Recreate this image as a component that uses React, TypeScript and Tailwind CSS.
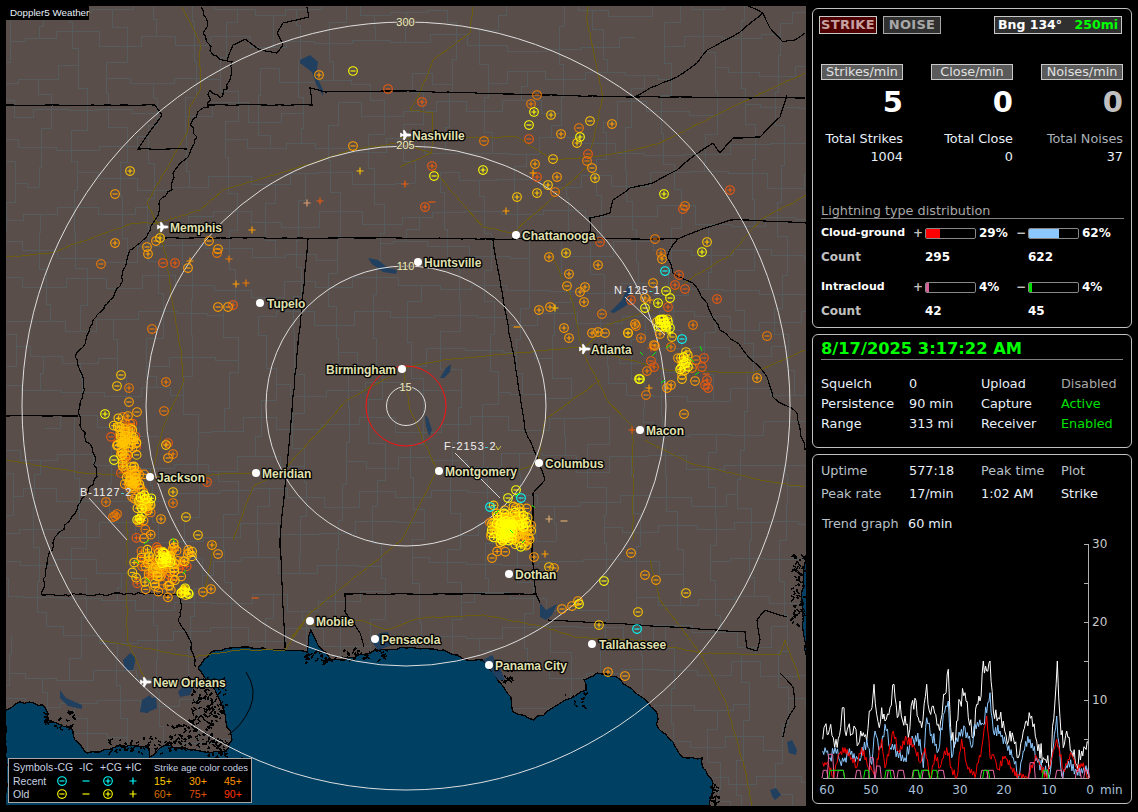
import React from "react";
import { Plane } from "lucide-react";

type P = [number, number];
function rng(seed: number) {
  let a = seed;
  return () => {
    a |= 0; a = (a + 0x6d2b79f5) | 0;
    let t = Math.imul(a ^ (a >>> 15), 1 | a);
    t = (t + Math.imul(t ^ (t >>> 7), 61 | t)) ^ t;
    return ((t ^ (t >>> 14)) >>> 0) / 4294967296;
  };
}
function rough(pts: P[], amp: number, seed: number, step = 6): P[] {
  const r = rng(seed);
  const out: P[] = [];
  for (let i = 0; i < pts.length - 1; i++) {
    const [x1, y1] = pts[i], [x2, y2] = pts[i + 1];
    const n = Math.max(1, Math.round(Math.hypot(x2 - x1, y2 - y1) / step));
    for (let k = 0; k < n; k++) {
      const t = k / n;
      const j = k === 0 ? 0 : amp;
      out.push([x1 + (x2 - x1) * t + (r() - 0.5) * j, y1 + (y2 - y1) * t + (r() - 0.5) * j]);
    }
  }
  out.push(pts[pts.length - 1]);
  return out;
}
const d = (pts: P[], close = false) => "M" + pts.map((p) => p[0].toFixed(1) + " " + p[1].toFixed(1)).join("L") + (close ? "Z" : "");

const gulf: P[] = [[6, 806], [6, 710], [20, 702], [43, 705], [50, 722], [70, 727], [75, 740], [87, 753], [100, 752], [120, 745], [147, 747], [150, 757], [165, 745], [190, 750], [205, 752], [225, 752], [232, 740], [226, 722], [222, 705], [215, 690], [205, 678], [198, 668], [211, 652], [242, 647], [284, 650], [307, 652], [311, 630], [318, 645], [332, 660], [345, 660], [375, 650], [406, 648], [444, 650], [467, 660], [483, 660], [498, 680], [511, 697], [513, 712], [534, 720], [565, 700], [586, 690], [584, 680], [597, 673], [617, 677], [640, 696], [657, 713], [658, 728], [673, 742], [682, 757], [702, 758], [703, 768], [713, 783], [710, 806]];
const atlantic: P[] = [[806, 555], [803, 575], [802, 600], [803, 630], [806, 655]];
const lakes: P[][] = [
  [[300, 60], [310, 55], [318, 62], [316, 75], [323, 90], [323, 96], [316, 84], [312, 72], [300, 63]],
  [[368, 258], [378, 260], [388, 268], [397, 270], [396, 274], [383, 272], [372, 264]],
  [[123, 660], [130, 653], [136, 658], [133, 670], [125, 670]],
  [[142, 700], [150, 695], [154, 702], [148, 713], [140, 712]],
  [[178, 692], [186, 682], [194, 686], [190, 695], [180, 697]],
  [[60, 690], [66, 698], [82, 705], [82, 709], [68, 706], [60, 698]],
  [[144, 700], [156, 697], [157, 708], [146, 713]],
  [[610, 312], [622, 300], [628, 285], [632, 292], [627, 305], [614, 313]],
  [[440, 378], [446, 368], [451, 364], [450, 372], [444, 378]],
  [[425, 415], [428, 418], [432, 430], [429, 436], [426, 426]],
  [[540, 603], [546, 610], [557, 604], [552, 615], [546, 620], [540, 617]],
  [[787, 742], [792, 740], [797, 750], [796, 755], [789, 753]],
  [[770, 790], [776, 788], [781, 795], [775, 800], [772, 796]],
  [[370, 640], [380, 633], [388, 632], [392, 645], [378, 650]],
  [[483, 660], [492, 655], [500, 668], [505, 680], [498, 680]],
];
const states: P[][] = [
  [[6, 105], [155, 105], [162, 115], [138, 149], [187, 149]],
  [[201, 7], [208, 23], [203, 33], [213, 55], [222, 60], [232, 62], [230, 80], [220, 98], [210, 90], [208, 107], [200, 110], [190, 125], [197, 137], [188, 157], [173, 173], [172, 190], [160, 200], [157, 217], [143, 240], [130, 250], [123, 270], [123, 280], [110, 300], [93, 320], [83, 347], [75, 357], [83, 377], [83, 393], [78, 413], [82, 430], [93, 453], [97, 477], [80, 503], [70, 520], [55, 537], [47, 565], [42, 595], [100, 594], [178, 594], [182, 607], [178, 620], [190, 640], [196, 667]],
  [[208, 105], [312, 105], [310, 88], [325, 92], [400, 91], [543, 95], [633, 97], [805, 98]],
  [[165, 238], [300, 238], [400, 238], [493, 239], [590, 239], [678, 239], [700, 230], [730, 220], [745, 220], [806, 223]],
  [[590, 239], [590, 218], [610, 213], [613, 200], [630, 188], [653, 183], [677, 170], [695, 155], [713, 143], [720, 153], [733, 138], [760, 137], [780, 117], [787, 95]],
  [[635, 97], [650, 88], [677, 77], [697, 63], [707, 50], [740, 32], [763, 13], [748, 6]],
  [[763, 13], [770, 28], [783, 42], [795, 40], [805, 33]],
  [[307, 7], [309, 17], [283, 23], [277, 33], [283, 45], [277, 53], [260, 50], [245, 39], [233, 45], [227, 60]],
  [[493, 240], [498, 270], [505, 310], [515, 363], [525, 430], [537, 457], [545, 480], [533, 493], [533, 510], [532, 553], [536, 594], [345, 594], [345, 612], [360, 633], [364, 647]],
  [[308, 238], [305, 270], [280, 540], [285, 648]],
  [[536, 594], [540, 603]],
  [[548, 620], [640, 625], [745, 632], [747, 648], [757, 651], [760, 640], [757, 620], [765, 610], [787, 617]],
  [[678, 239], [667, 257], [673, 273], [693, 283], [707, 303], [720, 330], [743, 350], [767, 377], [773, 397], [797, 413], [805, 450]],
  [[6, 416], [78, 416]],
  [[780, 673], [793, 687], [795, 707], [787, 720], [783, 737]],
];
const roads: P[][] = [
  [[182, 7], [200, 43], [200, 90], [190, 107], [187, 133], [173, 157], [147, 203], [157, 223], [167, 260], [172, 300], [182, 357], [183, 383], [163, 427], [153, 470], [148, 478]],
  [[6, 257], [50, 253], [133, 223], [157, 223], [200, 210], [223, 190], [267, 177], [313, 163], [350, 150], [400, 143], [432, 153]],
  [[473, 7], [470, 33], [433, 60], [420, 93], [410, 110], [433, 113], [432, 153], [400, 167]],
  [[432, 166], [453, 193], [483, 227], [513, 233], [587, 167], [603, 97], [587, 20], [588, 6]],
  [[400, 138], [517, 137], [553, 160], [593, 157], [633, 150], [660, 143], [720, 113], [805, 73]],
  [[580, 353], [607, 325], [653, 310], [693, 277], [730, 255], [760, 220], [806, 195]],
  [[550, 250], [573, 303], [582, 350], [607, 400], [633, 427], [633, 487], [633, 540]],
  [[645, 440], [690, 463], [760, 480], [805, 487]],
  [[403, 368], [443, 360], [580, 347], [667, 370], [753, 373], [805, 350]],
  [[403, 368], [410, 410], [437, 470], [402, 540], [368, 567], [310, 613], [290, 640]],
  [[397, 373], [347, 400], [287, 467], [253, 487], [233, 540]],
  [[6, 460], [83, 473], [150, 477], [257, 473]],
  [[100, 640], [192, 657], [240, 650], [285, 650], [310, 613]],
  [[310, 625], [360, 620], [387, 630], [418, 618], [483, 615], [544, 627], [578, 638], [640, 640], [700, 653], [780, 655]],
  [[127, 520], [127, 597], [127, 640], [145, 680]],
  [[215, 540], [203, 600]],
  [[650, 560], [660, 600], [700, 653], [725, 700], [745, 770], [752, 806]],
  [[780, 655], [785, 640], [800, 680]],
  [[447, 470], [520, 470], [538, 463], [545, 420], [600, 380]],
];

function counties(): string {
  const r = rng(77);
  const cw = 37, ch = 35;
  const v: P[][] = [];
  for (let i = 0; i <= 22; i++) {
    v[i] = [];
    for (let j = 0; j <= 23; j++) v[i][j] = [6 + i * cw + (r() - 0.5) * 22, 6 + j * ch + (r() - 0.5) * 22];
  }
  let s = "";
  for (let i = 0; i <= 22; i++) for (let j = 0; j <= 23; j++) {
    const a = v[i][j];
    if (i < 22 && r() > 0.14) {
      const b = v[i + 1][j];
      s += `M${a[0].toFixed(0)} ${a[1].toFixed(0)}H${((a[0] + b[0]) / 2).toFixed(0)}V${b[1].toFixed(0)}H${b[0].toFixed(0)}`;
    }
    if (j < 23 && r() > 0.14) {
      const b = v[i][j + 1];
      s += `M${a[0].toFixed(0)} ${a[1].toFixed(0)}V${((a[1] + b[1]) / 2).toFixed(0)}H${b[0].toFixed(0)}V${b[1].toFixed(0)}`;
    }
  }
  return s;
}

type S = [number, number, "p" | "m" | "P" | "M", string];
const Y = "#ffff00", G = "#ffc400", O = "#ff9d00", D = "#f07a00", R = "#ee5a0c", C = "#00ffff";
const single: S[] = [
  [130, 171, "p", G], [115, 194, "m", O], [115, 243, "p", O], [101, 264, "m", D], [319, 75, "p", O], [353, 71, "m", Y], [388, 89, "m", R], [353, 146, "m", O], [360, 171, "P", G], [307, 203, "P", "#e0a070"], [320, 201, "P", R], [252, 230, "P", O], [160, 238, "p", G], [156, 241, "m", O], [209, 241, "m", O], [218, 249, "m", O], [217, 253, "m", D], [229, 259, "P", D], [148, 254, "p", O], [147, 247, "m", O], [163, 263, "m", R], [175, 263, "p", R], [190, 261, "P", O], [188, 268, "m", O],
  [422, 102, "p", R], [537, 95, "m", D], [531, 104, "p", D], [534, 112, "p", Y], [551, 115, "p", G], [529, 125, "m", Y], [590, 121, "m", G], [612, 124, "p", O], [579, 128, "m", D], [561, 134, "p", O], [580, 137, "p", Y], [577, 143, "p", G], [529, 139, "m", R], [484, 141, "m", D], [588, 154, "m", R], [553, 159, "m", G], [587, 161, "m", D], [592, 168, "m", O], [535, 164, "p", O], [432, 166, "p", R], [434, 176, "m", Y], [483, 170, "p", Y], [533, 173, "P", O], [537, 177, "p", R], [557, 177, "p", O], [595, 178, "p", G], [548, 185, "p", G], [405, 184, "P", R], [555, 192, "m", D], [537, 193, "p", G], [517, 197, "p", G], [664, 194, "p", Y], [685, 206, "m", D], [683, 209, "m", R], [730, 190, "p", R], [425, 207, "p", R], [432, 202, "M", R], [506, 211, "P", O], [600, 242, "m", R], [655, 239, "m", D], [707, 242, "p", G], [702, 252, "p", Y], [661, 253, "p", D], [662, 259, "p", O], [549, 257, "p", O], [566, 253, "p", G], [598, 265, "p", O],
  [569, 274, "p", O], [567, 286, "m", O], [580, 292, "p", O], [585, 287, "p", O], [584, 302, "p", O], [539, 310, "p", O], [550, 307, "p", O], [555, 308, "P", G], [602, 314, "m", D], [564, 328, "p", O], [569, 338, "p", O], [592, 333, "p", O], [598, 332, "p", O], [605, 333, "m", O], [517, 327, "M", O], [653, 283, "m", O], [666, 291, "m", Y], [670, 298, "m", Y], [658, 303, "p", Y], [645, 298, "p", O], [631, 300, "p", R], [645, 308, "m", Y], [668, 307, "p", R], [675, 285, "p", R], [685, 289, "m", R], [679, 275, "p", R], [665, 271, "m", C], [717, 299, "p", R], [767, 336, "m", D], [757, 378, "p", O], [684, 414, "m", O], [646, 395, "m", D], [649, 388, "P", O], [640, 379, "m", Y], [639, 379, "p", Y], [667, 388, "p", O], [671, 385, "p", O], [632, 430, "P", R],
  [236, 284, "P", O], [246, 283, "P", D], [218, 307, "m", O], [228, 307, "m", O], [233, 305, "p", R], [152, 329, "m", D], [121, 375, "m", G], [117, 386, "m", G], [129, 388, "p", D], [166, 382, "p", D], [129, 402, "m", O], [105, 414, "p", Y], [137, 412, "m", O], [128, 416, "p", O], [123, 417, "m", D], [164, 411, "m", D], [125, 423, "m", D], [168, 443, "p", R], [166, 445, "p", G], [173, 454, "p", D], [168, 458, "m", O], [114, 460, "m", Y], [207, 482, "p", R], [173, 492, "p", G], [173, 503, "p", D], [106, 502, "p", D], [115, 516, "p", D], [113, 517, "m", D], [117, 514, "p", D], [161, 519, "p", O], [186, 517, "m", G], [198, 535, "m", G],
  [212, 545, "p", O], [218, 554, "m", O], [211, 589, "p", O], [203, 592, "m", O], [492, 558, "m", O], [545, 554, "P", O], [534, 557, "p", O], [549, 567, "m", G], [554, 568, "m", O], [631, 553, "m", O], [604, 581, "m", Y], [645, 575, "m", O], [656, 580, "m", O], [686, 593, "m", G], [638, 612, "m", G], [637, 629, "m", C], [599, 625, "p", G], [562, 609, "m", O], [572, 606, "m", O], [578, 601, "p", O], [579, 604, "m", Y], [608, 672, "p", O], [625, 676, "m", O], [255, 598, "M", R],
  [650, 300, "P", O], [516, 490, "m", Y], [521, 498, "m", C], [490, 507, "m", C], [508, 498, "m", Y], [549, 519, "P", "#e0b070"], [564, 521, "M", "#e0b070"],
  [682, 339, "m", C], [657, 322, "p", G], [664, 325, "p", G], [670, 328, "p", Y], [660, 320, "p", Y], [668, 322, "p", Y], [666, 327, "p", Y], [670, 333, "P", Y], [672, 337, "m", G], [628, 333, "p", G], [635, 324, "p", O], [636, 326, "m", D], [641, 338, "p", D], [628, 333, "m", O], [660, 334, "p", O], [671, 347, "p", D], [693, 325, "p", D], [704, 358, "m", R], [696, 360, "m", D], [702, 367, "m", R], [651, 361, "m", R], [654, 367, "p", R], [647, 371, "p", D], [707, 380, "p", R], [708, 388, "p", R], [705, 385, "m", R], [706, 374, "M", R], [695, 381, "m", O], [682, 379, "m", G], [685, 370, "p", G], [684, 364, "m", Y], [681, 358, "m", G], [686, 352, "p", G], [678, 358, "m", O], [692, 368, "m", D], [651, 348, "P", R], [655, 346, "p", D], [654, 345, "m", O],
];

function cluster(seed: number, n: number, cx: number, cy: number, sx: number, sy: number, cols: string[]): S[] {
  const r = rng(seed);
  const out: S[] = [];
  for (let i = 0; i < n; i++) {
    const u = Math.sqrt(-2 * Math.log(1 - r() * 0.98));
    const a = r() * Math.PI * 2;
    out.push([cx + Math.cos(a) * u * sx, cy + Math.sin(a) * u * sy, r() > 0.5 ? "p" : "m", cols[Math.floor(r() * cols.length)]]);
  }
  return out;
}
const order = [R, D, O, G, Y, C];
const strikes: S[] = [
  ...cluster(3, 50, 127, 442, 6, 13, [R, D, O, O, G, G]),
  ...cluster(12, 35, 132, 478, 6, 9, [D, O, O, G, G]),
  ...cluster(4, 14, 127, 443, 4, 6, [G, O, G]),
  ...cluster(5, 32, 142, 504, 6, 8, [Y, G, G, O, D]),
  ...cluster(6, 90, 160, 564, 13, 14, [R, D, O, O, O, G, G]),
  ...cluster(7, 16, 165, 560, 3, 5, [Y, Y, G]),
  ...cluster(8, 10, 185, 592, 3, 2.5, [Y, G]),
  ...cluster(9, 120, 510, 528, 10, 10, [G, G, G, O, O, O, Y]),
  ...cluster(10, 40, 509, 529, 4, 5, [Y, Y, G]),
  ...cluster(11, 24, 512, 528, 12, 12, [O, D, G]),
  ...cluster(13, 10, 664, 323, 4, 4, [Y, G]),
  ...cluster(14, 10, 683, 366, 3, 7, [G, Y, O]),
  ...single,
].sort((a, b) => order.indexOf(a[3]) - order.indexOf(b[3]));

function Sym({ s }: { s: S }) {
  const [x, y, t, c] = s;
  if (t === "p" || t === "m")
    return (
      <g stroke={c} fill="none" strokeWidth="1.15">
        <circle cx={x} cy={y} r="4.3" />
        <path d={t === "p" ? `M${x - 2.5} ${y}H${x + 2.5}M${x} ${y - 2.5}V${y + 2.5}` : `M${x - 2.5} ${y}H${x + 2.5}`} />
      </g>
    );
  return <path stroke={c} strokeWidth="1.15" d={t === "P" ? `M${x - 3.5} ${y}H${x + 3.5}M${x} ${y - 3.5}V${y + 3.5}` : `M${x - 3.5} ${y}H${x + 3.5}`} />;
}

type City = [string, number, number, number, boolean?];
const cities: City[] = [
  ["Nashville", 405, 135, 412, true], ["Memphis", 162, 227, 170, true], ["Chattanooga", 516, 235, 522], ["Huntsville", 418, 262, 424], ["Tupelo", 260, 303, 267], ["Birmingham", 402, 369, 326], ["Atlanta", 584, 349, 591, true], ["Macon", 640, 430, 646], ["Jackson", 150, 477, 157], ["Meridian", 256, 473, 262], ["Montgomery", 439, 471, 445], ["Columbus", 539, 463, 545], ["Dothan", 509, 574, 515], ["Mobile", 310, 621, 316], ["Pensacola", 375, 639, 381], ["Tallahassee", 592, 644, 599], ["Panama City", 489, 665, 495], ["New Orleans", 145, 682, 153, true],
];

function marsh(): string {
  const r = rng(21);
  let s = "";
  const spots: [number, number, number, number, number][] = [[208, 700, 18, 22, 130], [190, 735, 24, 14, 90], [140, 745, 32, 8, 50], [240, 765, 15, 8, 10], [218, 748, 12, 10, 40], [365, 655, 24, 5, 40], [320, 658, 15, 5, 30], [505, 675, 8, 10, 24], [798, 590, 6, 35, 70], [715, 795, 4, 12, 24], [60, 720, 15, 10, 30], [575, 700, 12, 8, 12]];
  for (const [x, y, sx, sy, n] of spots) for (let i = 0; i < n; i++) {
    const px = x + (r() - 0.5) * 2 * sx, py = y + (r() - 0.5) * 2 * sy;
    s += `M${px.toFixed(0)} ${py.toFixed(0)}l${(r() * 7 - 3.5).toFixed(0)} ${(r() * 7 - 3.5).toFixed(0)}`;
  }
  return s;
}

const rings = [384, 260, 140, 19.5];
const ringLabels: [string, number][] = [["300", 22], ["205", 145], ["110", 266], ["15", 387]];

function MapView() {
  return (
    <svg viewBox="6 6 800 800" className="block w-full h-full" style={{ fontFamily: '"Liberation Sans", Arial, sans-serif' }}>
      <rect x="6" y="6" width="800" height="800" fill="#5a4e4a" />
      <path d={counties()} fill="none" stroke="#565b5d" strokeWidth="1" shapeRendering="crispEdges" />
      <path d={d(rough(gulf, 2.4, 5, 5), true)} fill="#004163" stroke="#000" strokeWidth="1.3" shapeRendering="crispEdges" />
      <path d={d(rough(atlantic, 2, 6))} fill="#004163" stroke="#000" strokeWidth="1.3" shapeRendering="crispEdges" />
      <path d={marsh()} fill="none" stroke="#000" strokeWidth="1.6" shapeRendering="crispEdges" />
      <path d="M246 672Q258 690 250 708T228 735" fill="none" stroke="#000" strokeWidth="1" />
      {lakes.map((l, i) => (
        <path key={i} d={d(l, true)} fill="#213f5e" />
      ))}
      {roads.map((l, i) => (
        <path key={i} d={d(rough(l, 1, 30 + i, 5))} fill="none" stroke="#6c5c10" strokeWidth="1" shapeRendering="crispEdges" />
      ))}
      {states.map((l, i) => (
        <path key={i} d={d(rough(l, i === 1 || i === 12 ? 3 : 0.8, 60 + i, i === 1 ? 4 : 8))} fill="none" stroke="#000" strokeWidth="1.2" shapeRendering="crispEdges" />
      ))}
      {rings.map((r) => (
        <circle key={r} cx="406" cy="406" r={r} fill="none" stroke="#dedede" strokeWidth="1" />
      ))}
      <circle cx="406" cy="406" r="40" fill="none" stroke="#ff1010" strokeWidth="1" />
      {strikes.map((s, i) => (
        <Sym key={i} s={s} />
      ))}
      <path d="M670 345l-4 3M656 352l-4 4M640 352l3 3M665 380l-4 3M690 358l4 4M700 346l2 5M695 375l4-3M149 540l-5 4M172 538l3 4M135 560l4 4M146 578l4 4M186 570l-3 4M499 510l-4 4M515 497l4-4M532 505l3 3M510 530l3 3M525 540l-3 3" stroke="#00f000" strokeWidth="1" fill="none" />
      <g stroke="#d8d8d8" strokeWidth="1" fill="none">
        <path d="M89 498L127 540" />
        <path d="M625 297L665 335" />
        <path d="M455 453L500 498" />
      </g>
      {ringLabels.map(([t, y]) => (
        <text key={t} x="405.5" y={y + 4} textAnchor="middle" fontSize="11" fill="#eeeeb8" stroke="#5a4e4a" strokeWidth="2" style={{ paintOrder: "stroke" }}>{t}</text>
      ))}
      <g fontSize="11" fill="#f0f0f0" stroke="#5a4e4a" strokeWidth="0.5" style={{ paintOrder: "stroke", letterSpacing: "1px" }}>
        <text x="80" y="496">B-1127<tspan fill="#40e0e0">-</tspan>2</text>
        <text x="614" y="294">N-125<tspan fill="#40e0e0">-</tspan>1</text>
        <text x="444" y="450">F-2153<tspan fill="#40e0e0">-</tspan>2</text>
      </g>
      <path d="M496 446l2 4 3-4" stroke="#c8c840" fill="none" strokeWidth="1" />
      {cities.map(([name, x, y, lx, plane]) => (
        <g key={name}>
          {plane ? (
            <g transform={`rotate(45 ${x} ${y})`}>
              <Plane x={x - 6} y={y - 6} width={12} height={12} color="#000" fill="#fff" stroke="#fff" strokeWidth={1.5} />
            </g>
          ) : (
            <circle cx={x} cy={y} r="4" fill="#fff" />
          )}
          <text x={lx} y={y + 4.5} fontSize="12" fontWeight="700" fill="#e0e0b0" stroke="#000" strokeWidth="2.6" strokeLinejoin="round" style={{ paintOrder: "stroke" }}>{name}</text>
        </g>
      ))}
    </svg>
  );
}

function LegendSym({ t, c }: { t: "p" | "m" | "P" | "M"; c: string }) {
  return (
    <svg viewBox="0 0 12 12" className="w-[12px] h-[12px] block">
      <Sym s={[6, 6, t, c]} />
    </svg>
  );
}

function Legend() {
  return (
    <div className="absolute left-[2px] top-[752px] w-[244px] h-[45px] bg-black border border-[#a8a8a8] text-[10.5px] leading-[13px] text-[#c8d0e0] pl-[4px] pt-[2px] grid grid-cols-[41px_25px_21px_25px_29px_35px_35px_22px]" style={{ fontFamily: '"Liberation Sans", Arial, sans-serif' }}>
      <span>Symbols</span><span>-CG</span><span>-IC</span><span>+CG</span><span>+IC</span>
      <span className="col-span-3 whitespace-nowrap text-[9.5px]">Strike age color codes</span>
      <span>Recent</span>
      <span className="pl-[2px]"><LegendSym t="m" c={C} /></span>
      <span className="pl-[1px]"><LegendSym t="M" c={C} /></span>
      <span className="pl-[2px]"><LegendSym t="p" c={C} /></span>
      <span className="pl-[2px]"><LegendSym t="P" c={C} /></span>
      <span className="text-[#ffcc00]">15+</span><span className="text-[#ffa000]">30+</span><span className="text-[#ff9000]">45+</span>
      <span>Old</span>
      <span className="pl-[2px]"><LegendSym t="m" c={Y} /></span>
      <span className="pl-[1px]"><LegendSym t="M" c={Y} /></span>
      <span className="pl-[2px]"><LegendSym t="p" c={Y} /></span>
      <span className="pl-[2px]"><LegendSym t="P" c={Y} /></span>
      <span className="text-[#d87000]">60+</span><span className="text-[#e05010]">75+</span><span className="text-[#ff3300]">90+</span>
    </div>
  );
}

const W: P[] = [[38, 265], [42, 230], [48, 218], [55, 250], [62, 220], [70, 260], [78, 265], [85, 262], [92, 230], [97, 170], [102, 170], [105, 240], [112, 235], [118, 218], [125, 250], [132, 225], [138, 235], [145, 280], [152, 240], [160, 245], [170, 270], [178, 180], [186, 170], [192, 100], [200, 190], [208, 230], [215, 170], [225, 210], [240, 170], [252, 100], [262, 200], [270, 150], [278, 210], [285, 195], [295, 260], [308, 148], [318, 148], [325, 200], [335, 230], [350, 100], [358, 180], [370, 165], [385, 220], [392, 210], [405, 130], [415, 55], [422, 230], [432, 290], [440, 210], [450, 150], [465, 125], [475, 200], [490, 260], [500, 160], [510, 150], [520, 30], [530, 60], [540, 30], [550, 180], [565, 200], [580, 210], [592, 280], [600, 240], [610, 260], [625, 320], [640, 240], [650, 210], [665, 195], [680, 270], [700, 320], [720, 350], [735, 150], [742, 30], [750, 200], [760, 290], [770, 240], [785, 300], [800, 340], [815, 300], [825, 290], [835, 275]];
const B: P[] = [[38, 300], [45, 290], [60, 320], [75, 290], [90, 330], [105, 320], [125, 300], [150, 330], [170, 265], [185, 340], [195, 240], [210, 290], [225, 220], [240, 290], [262, 300], [285, 320], [310, 265], [330, 265], [340, 350], [350, 200], [365, 250], [385, 300], [400, 190], [415, 150], [425, 320], [440, 260], [465, 230], [485, 290], [495, 220], [520, 220], [540, 125], [550, 240], [570, 240], [590, 280], [610, 320], [625, 380], [640, 300], [660, 265], [680, 320], [700, 360], [720, 370], [740, 195], [755, 375], [775, 330], [800, 360], [835, 350]];
const Rd: P[] = [[38, 335], [55, 335], [70, 380], [85, 310], [105, 290], [125, 320], [140, 350], [155, 290], [175, 350], [195, 365], [215, 265], [225, 350], [250, 240], [265, 300], [290, 265], [310, 280], [330, 335], [345, 290], [360, 380], [375, 310], [390, 350], [410, 290], [425, 350], [440, 380], [455, 265], [470, 340], [495, 380], [515, 290], [530, 195], [540, 320], [550, 310], [565, 355], [585, 315], [605, 350], [625, 370], [650, 380], [680, 320], [710, 380], [740, 265], [760, 355], [785, 310], [800, 350], [820, 335], [835, 380]];
const pk: [number, number, number][] = [[40, 50, 358], [56, 68, 310], [85, 100, 358], [140, 150, 358], [180, 190, 320], [200, 210, 345], [235, 250, 358], [265, 280, 358], [310, 325, 358], [340, 355, 358], [385, 400, 358], [515, 530, 358], [535, 550, 358], [660, 672, 335], [740, 755, 358], [800, 810, 358], [825, 835, 358]];
const gr: [number, number, number][] = [[60, 100, 358], [165, 175, 358], [228, 240, 358], [312, 325, 358], [335, 355, 358], [368, 380, 358], [522, 535, 358], [700, 712, 358]];
const toPage = (p: P): P => [810 + p[0] / 3, 650 + p[1] / 3];
function wiggle(pts: P[], seed: number, amp: number): string {
  const r = rng(seed);
  const out: P[] = [];
  for (let i = 0; i < pts.length - 1; i++) {
    const a = toPage(pts[i]), b = toPage(pts[i + 1]);
    out.push(a);
    const n = Math.floor((b[0] - a[0]) / 1.1);
    for (let k = 1; k < n; k++) {
      const t = k / n;
      out.push([a[0] + (b[0] - a[0]) * t, Math.min(777, a[1] + (b[1] - a[1]) * t + (k % 2 ? 1 : -1) * r() * amp)]);
    }
  }
  out.push(toPage(pts[pts.length - 1]));
  return d(out);
}
function trap(a: [number, number, number][]): string {
  return a.map(([x1, x2, top]) => {
    const p = [toPage([x1 - 4, 382]), toPage([x1, top]), toPage([x2, top]), toPage([x2 + 4, 382])];
    return d(p as P[]);
  }).join("");
}

function Chart() {
  const ys: [number, string][] = [[543, "30"], [582, ""], [621, "20"], [660, ""], [699, "10"], [738, ""]];
  const xs: [number, string][] = [[827, "60"], [871, "50"], [916, "40"], [960, "30"], [1004, "20"], [1049, "10"], [1090, "0"]];
  return (
    <svg viewBox="813 530 318 272" className="block w-[318px] h-[272px]" style={{ fontFamily: '"DejaVu Sans", sans-serif' }}>
      <path d="M823 777.5H1088.5V543" fill="none" stroke="#b0b0b0" strokeWidth="1" shapeRendering="crispEdges" />
      {ys.map(([y, t]) => (
        <g key={y}>
          <path d={`M1084 ${y + 0.5}H1088`} stroke="#b0b0b0" shapeRendering="crispEdges" />
          {t && <text x="1092" y={y + 4} fontSize="12" fill="#c8c8c8">{t}</text>}
        </g>
      ))}
      <path d={wiggle(W, 1, 9)} fill="none" stroke="#ffffff" strokeWidth="1" />
      <path d={wiggle(B, 2, 7)} fill="none" stroke="#8cc8ff" strokeWidth="1" />
      <path d={wiggle(Rd, 3, 5)} fill="none" stroke="#ff0000" strokeWidth="1" />
      <path d={trap(pk)} fill="none" stroke="#e868a8" strokeWidth="1" />
      <path d={trap(gr)} fill="none" stroke="#00e800" strokeWidth="1" />
      {xs.map(([x, t]) => (
        <text key={t} x={x} y="793" textAnchor="middle" fontSize="12" fill="#a8c0d8">{t}</text>
      ))}
      <text x="1100" y="793" fontSize="12" fill="#a8c0d8">min</text>
    </svg>
  );
}

function Bar({ fill, w }: { fill: string; w: string }) {
  return (
    <div className="w-[51px] h-[11px] rounded-[2px] border border-[#888888] bg-black overflow-hidden shrink-0">
      <div className={`h-full ${fill} ${w}`} />
    </div>
  );
}

function DistRow({ label, bar1, w1, pct1, bar2, w2, pct2 }: { label: string; bar1: string; w1: string; pct1: string; bar2: string; w2: string; pct2: string }) {
  return (
    <div className="flex items-center h-[14px] font-bold text-white text-[12px]">
      <span className="w-[92px] whitespace-nowrap text-[11px]">{label}</span>
      <span className="w-[12px] text-[#c0c0c0]">+</span>
      <Bar fill={bar1} w={w1} />
      <span className="w-[40px] pl-[3px]">{pct1}</span>
      <span className="w-[12px] text-[#c0c0c0]">−</span>
      <Bar fill={bar2} w={w2} />
      <span className="pl-[3px]">{pct2}</span>
    </div>
  );
}

function CountRow({ a, b }: { a: string; b: string }) {
  return (
    <div className="flex items-center h-[14px] font-bold text-[12px]">
      <span className="w-[104px] text-[#c0c0c0]">Count</span>
      <span className="w-[103px] text-white">{a}</span>
      <span className="text-white">{b}</span>
    </div>
  );
}

export default function App() {
  const top = ["Strikes/min", "Close/min", "Noises/min"];
  return (
    <div className="w-[1138px] h-[812px] bg-black flex pl-[6px] pt-[6px] overflow-hidden text-[12.8px] text-white" style={{ fontFamily: '"DejaVu Sans", sans-serif' }}>
      <div className="relative w-[800px] h-[800px] shrink-0">
        <MapView />
        <div className="absolute left-0 top-0 w-[83px] h-[14px] bg-black text-[9.8px] leading-[14px] pl-[4px] text-[#e8f0f8] whitespace-nowrap" style={{ fontFamily: '"Liberation Sans", Arial, sans-serif' }}>Doppler5 Weather</div>
        <Legend />
      </div>
      <div className="ml-[6px] w-[320px] pt-[2px] flex flex-col gap-[6px]">
        <div className="h-[320px] border border-[#c0c0c0] rounded-[6px] px-[8px] relative">
          <div className="flex items-start pt-[7px] -ml-[2px] font-bold text-[13px] leading-[16px]">
            <span className="w-[58px] h-[18px] bg-[#500000] border border-[#c8c8c8] text-[#c8a0a0] text-center tracking-[0.3px]">STRIKE</span>
            <span className="ml-[6px] w-[58px] h-[18px] bg-[#303030] border border-[#a8a8a8] text-[#a8a8a8] text-center tracking-[0.3px]">NOISE</span>
            <span className="ml-[53px] w-[128px] h-[18px] bg-[#303030] border border-[#c8c8c8] flex justify-between pl-[3px] pr-[3px] text-white text-[12.5px]">
              <span>Bng 134°</span><span className="text-[#00ff00]">250mi</span>
            </span>
          </div>
          <div className="grid grid-cols-[82px_82px_82px] gap-x-[28px] mt-[30px]">
            {top.map((t) => (
              <div key={t} className="h-[16px] bg-[#5a5a5a] border border-[#c8c8c8] text-center leading-[14px] text-[#e0e0e0]">{t}</div>
            ))}
            <div className="text-right font-bold text-[29px] leading-[44px] h-[44px] text-white">5</div>
            <div className="text-right font-bold text-[29px] leading-[44px] h-[44px] text-white">0</div>
            <div className="text-right font-bold text-[29px] leading-[44px] h-[44px] text-[#c0c0c0]">0</div>
            <div className="text-right mt-[6px] leading-[18px] whitespace-nowrap text-[#e8f0f8]">Total Strikes</div>
            <div className="text-right mt-[6px] leading-[18px] whitespace-nowrap text-[#e8f0f8]">Total Close</div>
            <div className="text-right mt-[6px] leading-[18px] whitespace-nowrap text-[#a8b0b8]">Total Noises</div>
            <div className="text-right leading-[18px] text-[#e8f0f8]">1004</div>
            <div className="text-right leading-[18px] text-[#e8f0f8]">0</div>
            <div className="text-right leading-[18px] text-[#e8f0f8]">37</div>
          </div>
          <div className="mt-[37px] h-[16px] leading-[16px] border-b border-[#808080] text-[#a8a8a8] w-[303px]">Lightning type distribution</div>
          <div className="mt-[7px]"><DistRow label="Cloud-ground" bar1="bg-[#ff0000]" w1="w-[14px]" pct1="29%" bar2="bg-[#8cc8ff]" w2="w-[30px]" pct2="62%" /></div>
          <div className="mt-[10px]"><CountRow a="295" b="622" /></div>
          <div className="mt-[16px]"><DistRow label="Intracloud" bar1="bg-[#d86098]" w1="w-[3px]" pct1="4%" bar2="bg-[#00e000]" w2="w-[3px]" pct2="4%" /></div>
          <div className="mt-[10px]"><CountRow a="42" b="45" /></div>
        </div>
        <div className="h-[114px] border border-[#c0c0c0] rounded-[6px] px-[8px]">
          <div className="h-[24px] mt-[1px] border-b border-[#808080] font-bold text-[16.3px] leading-[25px] text-[#00ff00] w-[302px] whitespace-nowrap">8/17/2025 3:17:22 AM</div>
          <div className="mt-[14px] grid grid-cols-[88px_72px_80px_60px] leading-[20px] whitespace-nowrap text-[#e8f0f8]">
            <span>Squelch</span><span>0</span><span>Upload</span><span className="text-[#a8a8a8]">Disabled</span>
            <span>Persistence</span><span>90 min</span><span>Capture</span><span className="text-[#00e000]">Active</span>
            <span>Range</span><span>313 mi</span><span>Receiver</span><span className="text-[#00e000]">Enabled</span>
          </div>
        </div>
        <div className="h-[350px] border border-[#c0c0c0] rounded-[6px] overflow-hidden">
          <div className="px-[8px] pt-[4px] grid grid-cols-[88px_72px_80px_60px] leading-[23px] whitespace-nowrap text-[#e8f0f8]">
            <span className="text-[#b8c0c8]">Uptime</span><span>577:18</span><span className="text-[#b8c0c8]">Peak time</span><span className="text-[#b8c0c8]">Plot</span>
            <span className="text-[#b8c0c8]">Peak rate</span><span>17/min</span><span>1:02 AM</span><span>Strike</span>
          </div>
          <div className="flex pl-[9px] mt-[7px] leading-[23px] whitespace-nowrap">
            <span className="w-[86px] text-[#b8c0c8]">Trend graph</span><span className="text-[#e8f0f8]">60 min</span>
          </div>
          <div className="-mt-[4px]"><Chart /></div>
        </div>
      </div>
    </div>
  );
}
